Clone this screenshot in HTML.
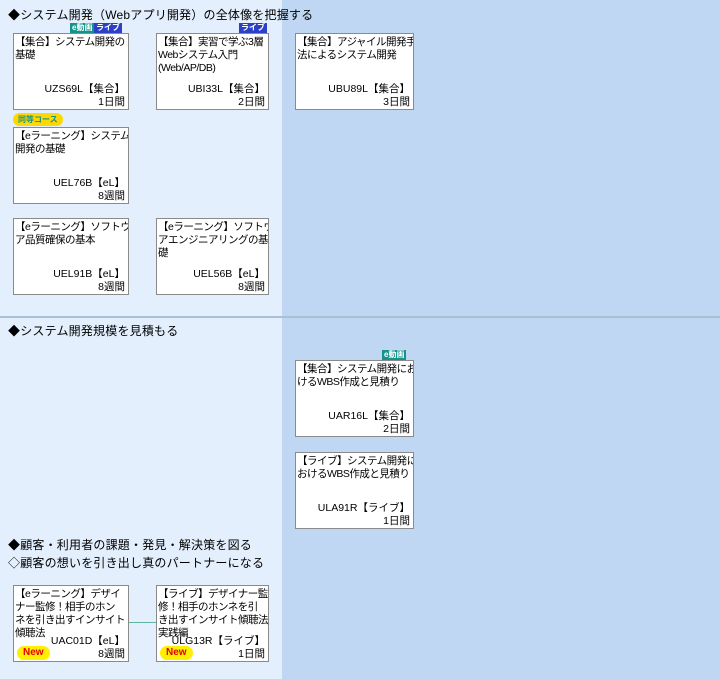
<!DOCTYPE html>
<html><head><meta charset="utf-8"><style>
body{margin:0;width:720px;height:679px;position:relative;overflow:hidden;font-family:"Liberation Sans","Noto Sans CJK JP",sans-serif;background:#bfd7f3}
.l{position:absolute;left:0;width:282px;background:#e3effd}
.h{position:absolute;font-size:12px;color:#000;white-space:nowrap;line-height:16px;letter-spacing:0.2px}
.c{position:absolute;width:116px;height:77px;background:#fff;border:1px solid #8a8a8a;box-sizing:border-box;font-size:10.5px;line-height:13px;padding:2px 0 1px 1px;color:#000;letter-spacing:-0.5px;white-space:nowrap;overflow:hidden}
.c .code{position:absolute;right:3px;bottom:13px;letter-spacing:0}
.c .d{position:absolute;right:3px;bottom:0;letter-spacing:0}
.tag{position:absolute;font-size:8px;line-height:10px;color:#fff;padding:0 2px;font-weight:bold}
.ev{background:#13938a}.lv{background:#2c3fc8}
.new{position:absolute;left:3px;bottom:1px;background:#ffef00;color:#e00000;font-size:10px;font-weight:bold;border-radius:8px;padding:1px 6px;line-height:12px;letter-spacing:0}
</style></head><body>
<div class="l" style="top:0;height:316px"></div>
<div class="l" style="top:318px;height:361px"></div>
<div style="position:absolute;left:0;top:316px;width:720px;height:2px;background:#a9bfd6"></div>

<div class="h" style="left:8px;top:7px">◆システム開発（Webアプリ開発）の全体像を把握する</div>
<div class="tag ev" style="left:70px;top:23px">e動画</div><div class="tag lv" style="left:94px;top:23px">ライブ</div>
<div class="c" style="left:13px;top:33px">【集合】システム開発の<br>基礎<span class="code">UZS69L【集合】</span><span class="d">1日間</span></div>
<div class="tag lv" style="left:239px;top:23px">ライブ</div>
<div class="c" style="left:156px;top:33px;width:113px">【集合】実習で学ぶ3層<br>Webシステム入門<br>(Web/AP/DB)<span class="code">UBI33L【集合】</span><span class="d">2日間</span></div>
<div class="c" style="left:295px;top:33px;width:119px">【集合】アジャイル開発手<br>法によるシステム開発<span class="code">UBU89L【集合】</span><span class="d">3日間</span></div>
<div style="position:absolute;left:13px;top:113px;background:#ffd800;color:#13938a;font-size:8px;font-weight:bold;border-radius:7px;padding:0 5px;line-height:13px">同等コース</div>
<div class="c" style="left:13px;top:127px">【eラーニング】システム<br>開発の基礎<span class="code">UEL76B【eL】</span><span class="d">8週間</span></div>
<div class="c" style="left:13px;top:218px">【eラーニング】ソフトウェ<br>ア品質確保の基本<span class="code">UEL91B【eL】</span><span class="d">8週間</span></div>
<div class="c" style="left:156px;top:218px;width:113px">【eラーニング】ソフトウェ<br>アエンジニアリングの基<br>礎<span class="code">UEL56B【eL】</span><span class="d">8週間</span></div>

<div class="h" style="left:8px;top:323px">◆システム開発規模を見積もる</div>
<div class="tag ev" style="left:382px;top:350px">e動画</div>
<div class="c" style="left:295px;top:360px;width:119px">【集合】システム開発にお<br>けるWBS作成と見積り<span class="code">UAR16L【集合】</span><span class="d">2日間</span></div>
<div class="c" style="left:295px;top:452px;width:119px">【ライブ】システム開発に<br>おけるWBS作成と見積り<span class="code">ULA91R【ライブ】</span><span class="d">1日間</span></div>

<div class="h" style="left:8px;top:537px">◆顧客・利用者の課題・発見・解決策を図る</div>
<div class="h" style="left:8px;top:555px">◇顧客の想いを引き出し真のパートナーになる</div>
<div style="position:absolute;left:129px;top:622px;width:28px;height:1px;background:#5fb6a0"></div>
<div class="c" style="left:13px;top:585px">【eラーニング】デザイ<br>ナー監修！相手のホン<br>ネを引き出すインサイト<br>傾聴法<span class="code">UAC01D【eL】</span><span class="d">8週間</span><span class="new">New</span></div>
<div class="c" style="left:156px;top:585px;width:113px">【ライブ】デザイナー監<br>修！相手のホンネを引<br>き出すインサイト傾聴法<br>実践編<span class="code">ULG13R【ライブ】</span><span class="d">1日間</span><span class="new">New</span></div>
</body></html>
